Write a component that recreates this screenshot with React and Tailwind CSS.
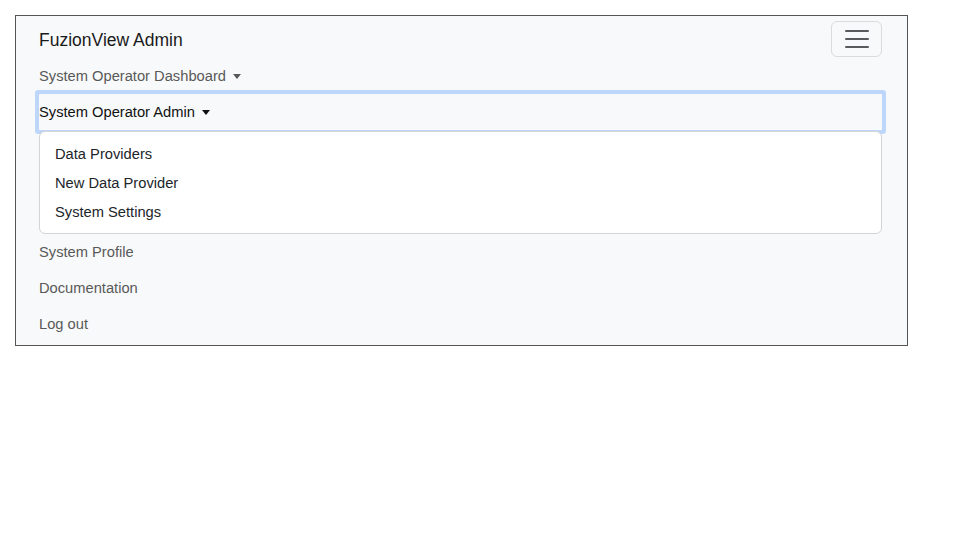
import React from 'react';

const Caret = () => (
  <span className="inline-block ml-[7px] align-[3px] w-0 h-0 border-t-[5px] border-t-current border-x-[4px] border-x-transparent" />
);

const NavLink = ({ children }) => (
  <div className="h-9 flex items-center text-[14.7px] text-[#595959]">{children}</div>
);

export default function App() {
  return (
    <div className="w-[960px] h-[540px] bg-white pt-[15px] pl-[15px]" style={{ fontFamily: '"Liberation Sans", Arial, sans-serif' }}>
      <nav className="w-[893px] h-[331px] border border-[#555] bg-[#f8f9fa] pt-[5px] pl-[23px] pr-[25px]">
        <div className="h-9 flex items-center justify-between">
          <span className="text-[17.5px] text-[#1a1a1a] pt-[2px]">FuzionView Admin</span>
          <button className="w-[51px] h-[36px] border border-[#dadbdc] rounded-[6px] flex items-center justify-center">
            <svg width="30" height="30" viewBox="0 0 30 30">
              <path d="M4 7h22M4 15h22M4 23h22" stroke="rgba(33,37,41,0.75)" strokeWidth="2" strokeLinecap="round" />
            </svg>
          </button>
        </div>
        <div className="flex flex-col mt-px">
          <NavLink>
            System Operator Dashboard
            <Caret />
          </NavLink>
          <div className="h-9 flex items-center text-[14.7px] text-[#111] shadow-[0_0_0_4px_rgba(13,110,253,0.25)] rounded-[1px]">
            System Operator Admin
            <Caret />
          </div>
          <div className="relative z-10 mt-px bg-white border border-[#d3d4d5] rounded-[6px] pt-[8px] pb-[6px]">
            {['Data Providers', 'New Data Provider', 'System Settings'].map((t) => (
              <div key={t} className="h-[29px] flex items-center px-[15px] text-[14.7px] text-[#212529]">{t}</div>
            ))}
          </div>
          <NavLink>System Profile</NavLink>
          <NavLink>Documentation</NavLink>
          <NavLink>Log out</NavLink>
        </div>
      </nav>
    </div>
  );
}
